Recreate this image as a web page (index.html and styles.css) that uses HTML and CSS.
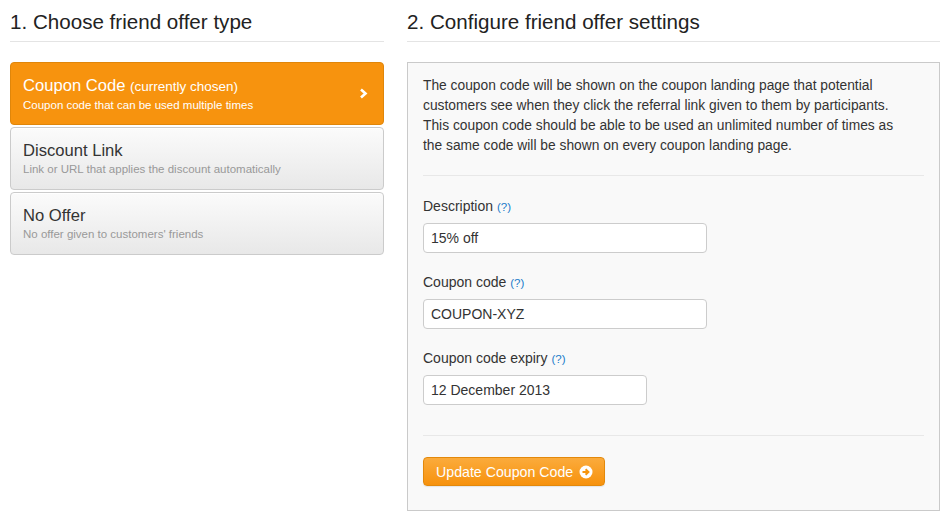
FILE: index.html
```html
<!DOCTYPE html>
<html>
<head>
<meta charset="utf-8">
<link rel="stylesheet" href="styles.css">
</head>
<body>
<div class="page">
  <section class="col-left">
    <h2 class="heading">1. Choose friend offer type</h2>
    <div class="offer-list">
      <div class="offer active">
        <div class="offer-text">
          <div class="offer-title">Coupon Code <span class="chosen">(currently chosen)</span></div>
          <div class="offer-sub">Coupon code that can be used multiple times</div>
        </div>
        <svg class="chevron" width="9" height="11" viewBox="0 0 9 11"><path d="M2 1.5 L6.5 5.5 L2 9.5" fill="none" stroke="#fff" stroke-width="2.6" stroke-linejoin="miter"/></svg>
      </div>
      <div class="offer">
        <div class="offer-text">
          <div class="offer-title">Discount Link</div>
          <div class="offer-sub">Link or URL that applies the discount automatically</div>
        </div>
      </div>
      <div class="offer">
        <div class="offer-text">
          <div class="offer-title">No Offer</div>
          <div class="offer-sub">No offer given to customers' friends</div>
        </div>
      </div>
    </div>
  </section>
  <section class="col-right">
    <h2 class="heading">2. Configure friend offer settings</h2>
    <div class="panel">
      <p class="intro">The coupon code will be shown on the coupon landing page that potential customers see when they click the referral link given to them by participants. This coupon code should be able to be used an unlimited number of times as the same code will be shown on every coupon landing page.</p>
      <div class="divider"></div>
      <div class="field">
        <label class="label">Description <a class="help">(?)</a></label>
        <div class="input wide">15% off</div>
      </div>
      <div class="field">
        <label class="label">Coupon code <a class="help">(?)</a></label>
        <div class="input wide">COUPON-XYZ</div>
      </div>
      <div class="field last">
        <label class="label">Coupon code expiry <a class="help">(?)</a></label>
        <div class="input narrow">12 December 2013</div>
      </div>
      <div class="divider lower"></div>
      <button class="btn">Update Coupon Code
        <svg class="btn-icon" width="14" height="14" viewBox="0 0 14 14"><circle cx="7" cy="7" r="6.5" fill="#fff"/><path d="M3.5 7 H9 M6.6 4.3 L9.4 7 L6.6 9.7" fill="none" stroke="#f7960f" stroke-width="2"/></svg>
      </button>
    </div>
  </section>
</div>
</body>
</html>
```
FILE: styles.css
```css
html, body {
  margin: 0;
  padding: 0;
  background: #fff;
}
body {
  font-family: "Liberation Sans", Arial, Helvetica, sans-serif;
  font-size: 14px;
  line-height: 20px;
  color: #333;
}
.page {
  display: flex;
  gap: 23px;
  padding: 8px 7px 0 10px;
}
.col-left {
  width: 374px;
  flex: none;
}
.col-right {
  flex: 1;
}
.heading {
  margin: 0 0 20px 0;
  font-size: 20.6px;
  font-weight: normal;
  line-height: 27px;
  padding-bottom: 6px;
  border-bottom: 1px solid #e4e4e4;
  color: #222;
}
.offer-list {
  display: flex;
  flex-direction: column;
  gap: 2px;
}
.offer {
  height: 61px;
  border: 1px solid #cbcbcb;
  border-radius: 4px;
  background: linear-gradient(#fbfbfb, #e8e8e8);
  display: flex;
  align-items: center;
  padding: 0 12px;
  box-shadow: inset 0 1px 0 #fff;
}
.offer-text {
  flex: 1;
  padding-top: 2px;
}
.offer-title {
  font-size: 16.6px;
  line-height: 20px;
  color: #333;
}
.offer-sub {
  font-size: 11.5px;
  line-height: 17px;
  color: #999;
}
.offer.active {
  background: #f7930e;
  border-color: #e0860a;
  box-shadow: none;
}
.offer.active .offer-title,
.offer.active .offer-sub {
  color: #fff;
}
.chosen {
  font-size: 13.5px;
}
.chevron {
  margin-right: 3px;
}
.panel {
  border: 1px solid #cacaca;
  background: #f9f9f9;
  padding: 13px 15px 24px 15px;
}
.intro {
  margin: 0;
  padding-right: 18px;
  font-size: 13.8px;
  color: #333;
}
.divider {
  height: 1px;
  background: #e8e8e8;
  margin: 19px 0 20px 0;
}
.field {
  display: flex;
  flex-direction: column;
  gap: 6px;
  margin-bottom: 19px;
}
.field.last {
  margin-bottom: 0;
}
.divider.lower {
  margin: 30px 0 21px 0;
}
.label {
  font-size: 14px;
  line-height: 20px;
  color: #333;
}
.help {
  font-size: 11.5px;
  color: #1a7bc9;
}
.input {
  height: 28px;
  line-height: 28px;
  border: 1px solid #cccccc;
  border-radius: 4px;
  background: #fff;
  padding: 0 7px;
  font-size: 14px;
  color: #333;
  box-sizing: content-box;
}
.wide {
  width: 268px;
}
.narrow {
  width: 208px;
}
.btn {
  display: inline-flex;
  align-items: center;
  gap: 6px;
  height: 29px;
  padding: 0 11px 0 12px;
  border: 1px solid #e3890b;
  border-radius: 4px;
  background: linear-gradient(#fbab3c, #f7920d);
  color: #fff;
  font-family: "Liberation Sans", Arial, sans-serif;
  font-size: 14.2px;
  box-shadow: 0 1px 1px rgba(0,0,0,0.08);
}
.btn-icon {
  display: block;
}
```
